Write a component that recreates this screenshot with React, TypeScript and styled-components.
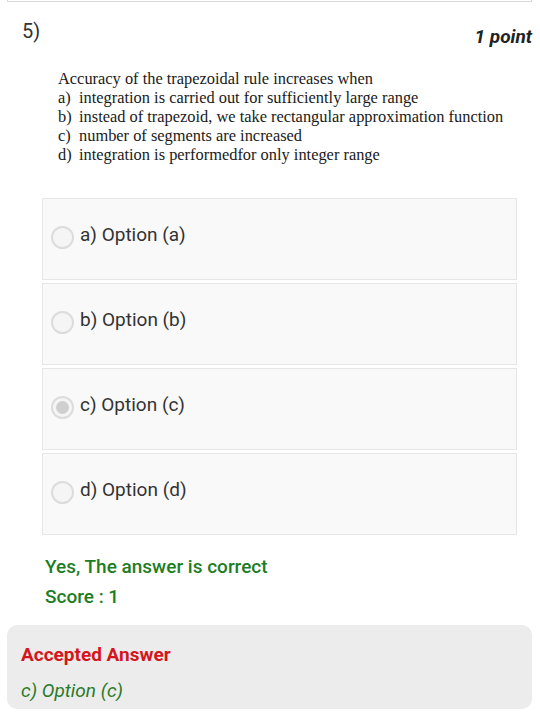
import React from "react";
import styled, { createGlobalStyle } from "styled-components";

const Global = createGlobalStyle`
  html, body { margin: 0; padding: 0; background: #ffffff; }
  body { font-family: Roboto, "Noto Sans", "Liberation Sans", sans-serif; width: 540px; }
`;

const Page = styled.div`
  width: 540px;
  height: 718px;
  overflow: hidden;
  background: #fff;
  display: flex;
  flex-direction: column;
`;

const PrevCardEdge = styled.div`
  margin: 0 8px 0 7px;
  height: 1px;
  border: 1px solid #d9d9d9;
  border-top: none;
`;

const Header = styled.div`
  display: flex;
  justify-content: space-between;
  align-items: flex-start;
  padding: 17px 8px 0 22px;
  height: 36px;
`;

const Number = styled.span`
  font-size: 20px;
  color: #333;
  line-height: 24px;
`;

const Points = styled.span`
  font-size: 19px;
  font-weight: 700;
  font-style: italic;
  color: #222;
  line-height: 24px;
  margin-top: 6px;
`;

const Question = styled.div`
  margin: 14px 0 0 58px;
  font-family: "Liberation Serif", "Times New Roman", serif;
  font-size: 16.4px;
  line-height: 19px;
  color: #1a1a1a;
`;

const QItem = styled.div`
  display: flex;
`;

const QLabel = styled.span`
  width: 21px;
  flex: none;
`;

const Options = styled.div`
  margin: 34px 0 0 42px;
  width: 475px;
  display: flex;
  flex-direction: column;
  gap: 3px;
`;

const OptionBox = styled.div`
  box-sizing: border-box;
  height: 82px;
  background: #f9f9f9;
  border: 1px solid #e6e6e6;
  display: flex;
  align-items: flex-start;
  padding: 24px 0 0 8px;
  gap: 6px;
`;

const Radio = styled.span<{ $checked?: boolean }>`
  box-sizing: border-box;
  width: 23px;
  height: 23px;
  margin-top: 3px;
  border-radius: 50%;
  border: 2px solid #dcdcdc;
  background: #f5f5f5;
  display: flex;
  align-items: center;
  justify-content: center;
  flex: none;
  &::after {
    content: "";
    display: ${(p) => (p.$checked ? "block" : "none")};
    width: 13px;
    height: 13px;
    border-radius: 50%;
    background: #cfcfcf;
  }
`;

const OptionText = styled.span`
  font-size: 19px;
  color: #333;
  line-height: 23px;
`;

const Feedback = styled.div`
  margin: 20px 0 0 45px;
  display: flex;
  flex-direction: column;
  gap: 6px;
`;

const FeedbackLine = styled.div`
  font-size: 19px;
  font-weight: 500;
  color: #1d7d23;
  line-height: 24px;
`;

const AcceptedBox = styled.div`
  margin: 16px 8px 0 7px;
  height: 84px;
  box-sizing: border-box;
  background: #ececec;
  border-radius: 10px;
  padding: 18px 14px 0 14px;
  display: flex;
  flex-direction: column;
  gap: 12px;
`;

const AcceptedTitle = styled.div`
  font-size: 19px;
  font-weight: 700;
  color: #d4161c;
  line-height: 24px;
`;

const AcceptedValue = styled.div`
  font-size: 19px;
  font-style: italic;
  color: #2a7a2a;
  line-height: 24px;
`;

const questionItems = [
  ["a)", "integration is carried out for sufficiently large range"],
  ["b)", "instead of trapezoid, we take rectangular approximation function"],
  ["c)", "number of segments are increased"],
  ["d)", "integration is performedfor only integer range"],
];

const options = [
  { label: "a) Option (a)", checked: false },
  { label: "b) Option (b)", checked: false },
  { label: "c) Option (c)", checked: true },
  { label: "d) Option (d)", checked: false },
];

export default function App() {
  return (
    <Page>
      <Global />
      <PrevCardEdge />
      <Header>
        <Number>5)</Number>
        <Points>1 point</Points>
      </Header>
      <Question>
        <div>Accuracy of the trapezoidal rule increases when</div>
        {questionItems.map(([l, t]) => (
          <QItem key={l}>
            <QLabel>{l}</QLabel>
            <span>{t}</span>
          </QItem>
        ))}
      </Question>
      <Options>
        {options.map((o) => (
          <OptionBox key={o.label}>
            <Radio $checked={o.checked} />
            <OptionText>{o.label}</OptionText>
          </OptionBox>
        ))}
      </Options>
      <Feedback>
        <FeedbackLine>Yes, The answer is correct</FeedbackLine>
        <FeedbackLine>Score : 1</FeedbackLine>
      </Feedback>
      <AcceptedBox>
        <AcceptedTitle>Accepted Answer</AcceptedTitle>
        <AcceptedValue>c) Option (c)</AcceptedValue>
      </AcceptedBox>
    </Page>
  );
}
